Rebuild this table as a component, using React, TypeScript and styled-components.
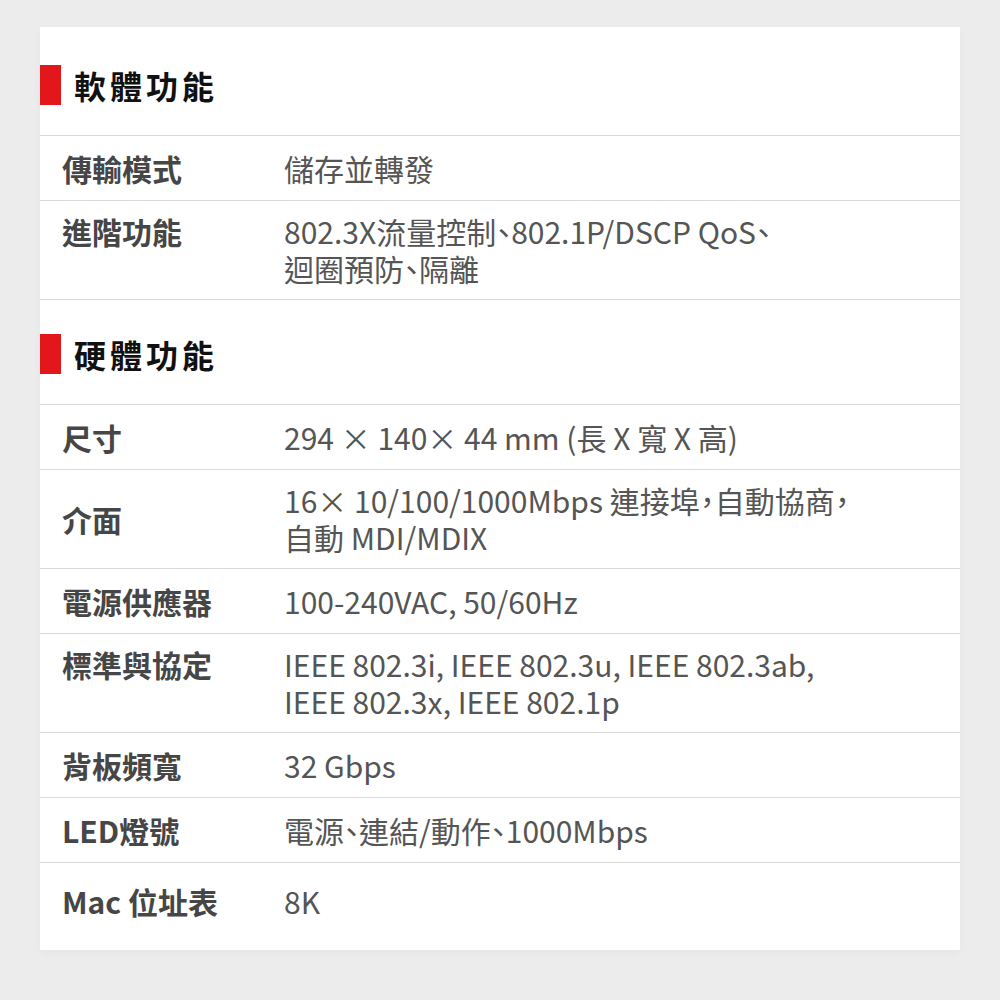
import styled, { createGlobalStyle } from "styled-components";

const GlobalStyle = createGlobalStyle`
  html, body {
    margin: 0;
    padding: 0;
    background: #ececec;
  }

  body {
    font-family: "Noto Sans CJK TC", "Noto Sans", sans-serif;
  }
`;

const Page = styled.div`
  padding: 27px 40px 52px;
`;

const Card = styled.div`
  background: #ffffff;
  padding: 4px 0 18px;
  box-shadow: 0 3px 8px rgba(0, 0, 0, 0.03);
`;

const SectionHeader = styled.div`
  display: flex;
  align-items: center;
  gap: 13px;
  padding: 34px 0 30px;
  border-bottom: 1px solid #d9d9d9;
`;

const RedBar = styled.span`
  width: 21px;
  height: 40px;
  background: #e3161c;
`;

const SectionTitle = styled.h2`
  margin: 0;
  font-size: 32px;
  font-weight: 700;
  letter-spacing: 4px;
  color: #111111;
  line-height: 40px;
`;

const Row = styled.div<{ $last?: boolean }>`
  display: grid;
  grid-template-columns: 244px 1fr;
  align-items: center;
  box-sizing: border-box;
  min-height: 65px;
  padding: ${(p) => (p.$last ? "20px 0 12px" : "12px 0")};
  border-bottom: ${(p) => (p.$last ? "none" : "1px solid #d9d9d9")};
`;

const Label = styled.div<{ $top?: boolean }>`
  align-self: ${(p) => (p.$top ? "start" : "center")};
  padding-left: 22px;
  font-size: 30px;
  font-weight: 700;
  line-height: 37px;
  color: #464646;
`;

const Value = styled.div`
  font-size: 30px;
  font-weight: 400;
  line-height: 37px;
  color: #555555;
  font-feature-settings: "palt";
`;

type Spec = { label: string; lines: string[]; top?: boolean };

const software: Spec[] = [
  { label: "傳輸模式", lines: ["儲存並轉發"] },
  {
    label: "進階功能",
    lines: ["802.3X流量控制、802.1P/DSCP QoS、", "迴圈預防、隔離"],
    top: true,
  },
];

const hardware: Spec[] = [
  { label: "尺寸", lines: ["294 × 140× 44 mm (長 X 寬 X 高)"] },
  {
    label: "介面",
    lines: ["16× 10/100/1000Mbps 連接埠，自動協商，", "自動 MDI/MDIX"],
  },
  { label: "電源供應器", lines: ["100-240VAC, 50/60Hz"] },
  {
    label: "標準與協定",
    lines: ["IEEE 802.3i, IEEE 802.3u, IEEE 802.3ab,", "IEEE 802.3x, IEEE 802.1p"],
    top: true,
  },
  { label: "背板頻寬", lines: ["32 Gbps"] },
  { label: "LED燈號", lines: ["電源、連結/動作、1000Mbps"] },
  { label: "Mac 位址表", lines: ["8K"] },
];

const SpecSection = ({
  title,
  specs,
  isLast,
}: {
  title: string;
  specs: Spec[];
  isLast?: boolean;
}) => (
  <section>
    <SectionHeader>
      <RedBar />
      <SectionTitle>{title}</SectionTitle>
    </SectionHeader>
    {specs.map((spec, i) => (
      <Row key={spec.label} $last={isLast && i === specs.length - 1}>
        <Label $top={spec.top}>{spec.label}</Label>
        <Value>
          {spec.lines.map((line, j) => (
            <div key={j}>{line}</div>
          ))}
        </Value>
      </Row>
    ))}
  </section>
);

export default function App() {
  return (
    <>
      <GlobalStyle />
      <Page>
        <Card>
          <SpecSection title="軟體功能" specs={software} />
          <SpecSection title="硬體功能" specs={hardware} isLast />
        </Card>
      </Page>
    </>
  );
}
